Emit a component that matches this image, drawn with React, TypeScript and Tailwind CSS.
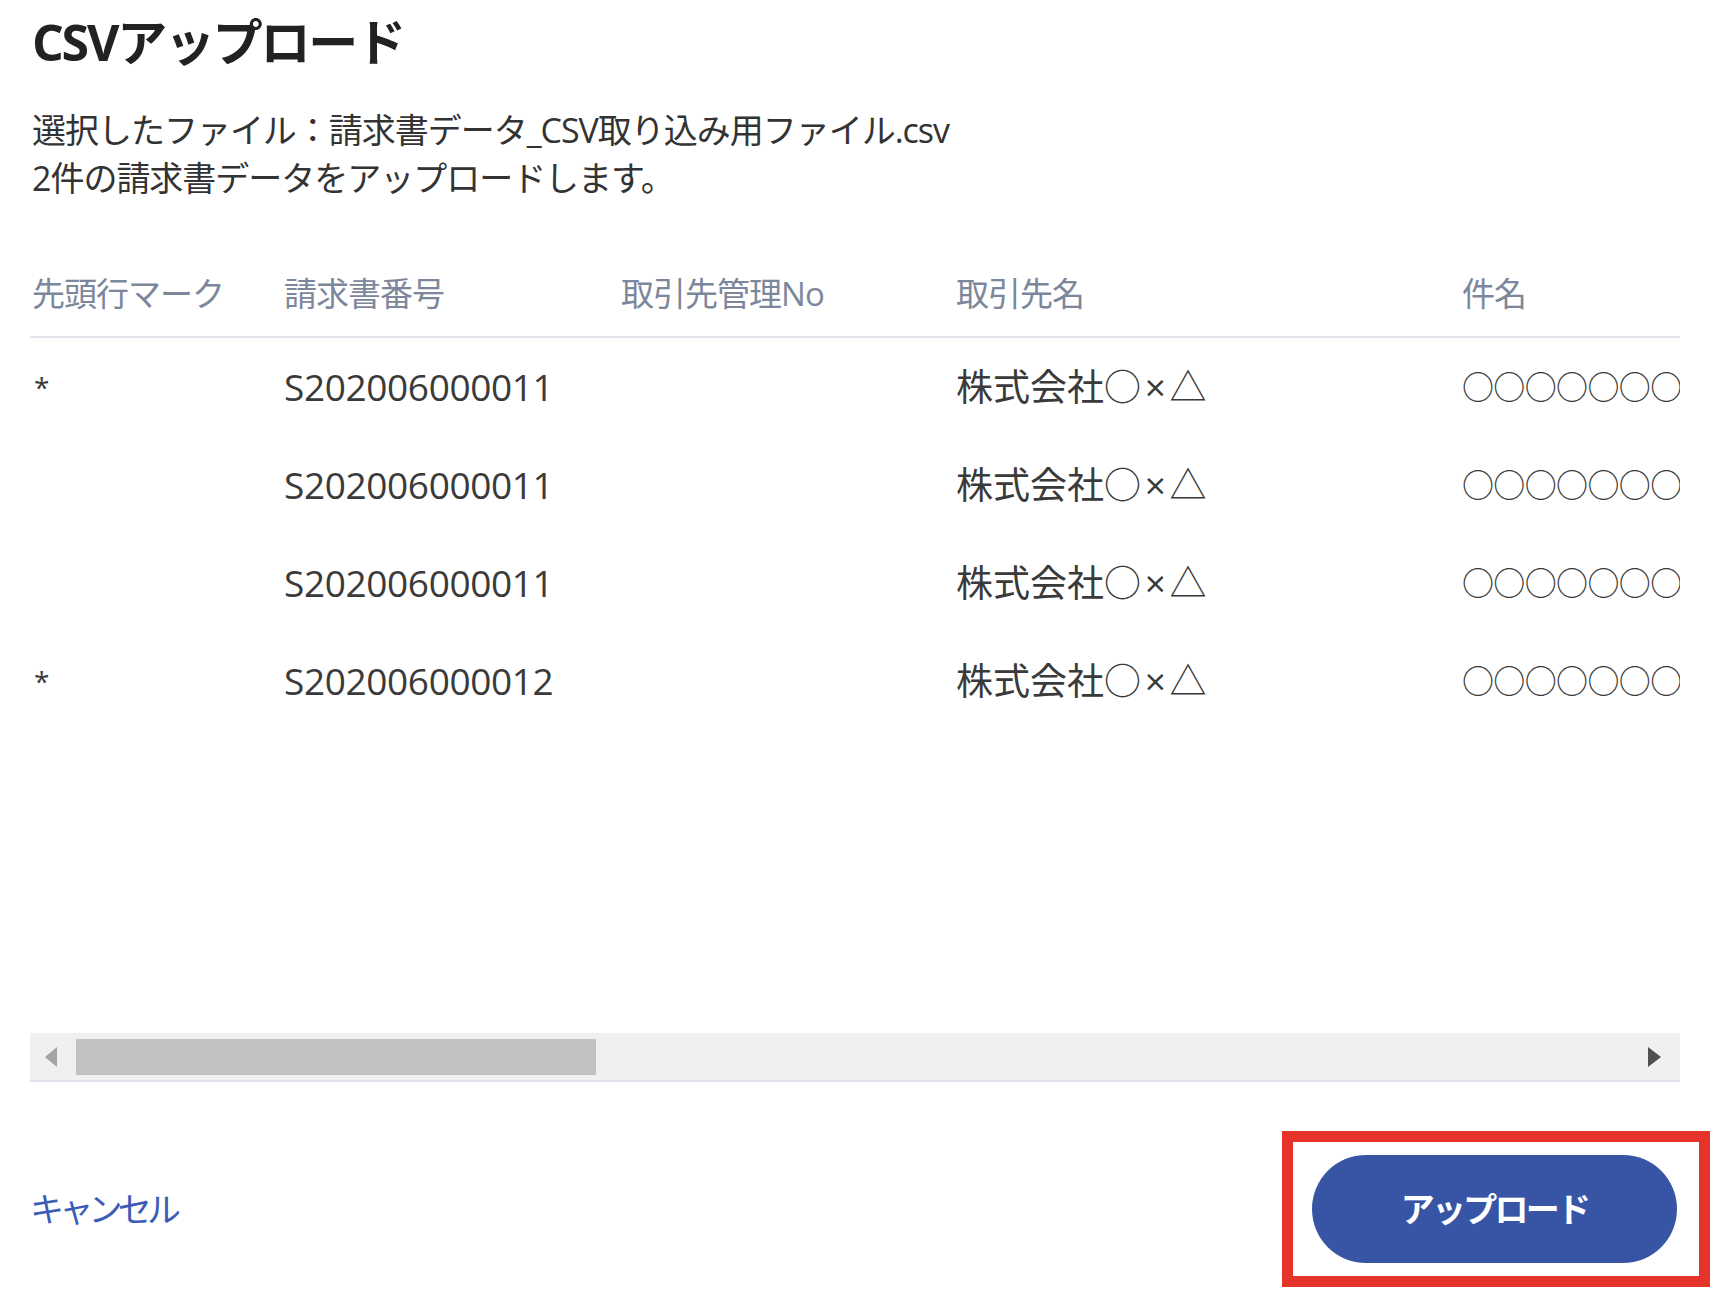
import React from 'react';

const headers = ['先頭行マーク', '請求書番号', '取引先管理No', '取引先名', '件名'];

const rows = [
  { mark: '*', no: 'S202006000011', ref: '', subject: '○○○○○○○○' },
  { mark: '', no: 'S202006000011', ref: '', subject: '○○○○○○○○' },
  { mark: '', no: 'S202006000011', ref: '', subject: '○○○○○○○○' },
  { mark: '*', no: 'S202006000012', ref: '', subject: '○○○○○○○○' },
];

const cols = 'grid grid-cols-[252px_337px_335px_506px_1fr]';

export default function App() {
  return (
    <div className="min-h-screen w-full bg-white font-['Open_Sans','Noto_Sans_CJK_JP',sans-serif]">
      <div className="w-[1680px] pl-[30px]">
        {/* Title */}
        <h1 className="pt-[12px] pl-[2px] text-[50px] font-bold leading-[60px] tracking-[-0.045em] text-[#222]">
          CSVアップロード
        </h1>

        {/* Description */}
        <div className="mt-[34px] pl-[2px] text-[34px] leading-[48px] tracking-[-0.03em] text-[#333]">
          <p>選択したファイル：請求書データ_CSV取り込み用ファイル.csv</p>
          <p>2件の請求書データをアップロードします。</p>
        </div>

        {/* Table */}
        <div className="mt-[68px] h-[763px] overflow-hidden">
          <div className={`${cols} border-b-2 border-[#e1e5ec] pb-[18px] text-[33px] leading-[48px] tracking-[-0.03em] text-[#7c879c]`}>
            {headers.map((h) => (
              <div key={h} className="whitespace-nowrap pl-[2px]">{h}</div>
            ))}
          </div>
          {rows.map((r, i) => (
            <div key={i} className={`${cols} h-[98px] items-center text-[37px] text-[#3a3a3a]`}>
              <div className="self-start pt-[28px] pl-[4px] text-[28px]">{r.mark}</div>
              <div className="pl-[2px] tracking-[-0.01em]">{r.no}</div>
              <div>{r.ref}</div>
              <div className="pl-[2px] whitespace-nowrap">
                株式会社<span className="tracking-[0.1em]">○×△</span>
              </div>
              <div className="overflow-hidden whitespace-nowrap pl-[2px] text-[32px] tracking-[-0.02em]">{r.subject}</div>
            </div>
          ))}
        </div>

        {/* Horizontal scrollbar */}
        <div className="flex h-[49px] items-center border-b-2 border-[#dde1ec] bg-[#f0f0f0] pl-[15px] pr-[19px]">
          <svg width="12" height="20" viewBox="0 0 12 20" className="shrink-0">
            <polygon points="12,0 12,20 0,10" fill="#a3a3a3" />
          </svg>
          <div className="ml-[19px] h-[36px] w-[520px] bg-[#c1c1c1]" />
          <div className="flex-1" />
          <svg width="13" height="20" viewBox="0 0 13 20" className="shrink-0">
            <polygon points="0,0 0,20 13,10" fill="#505050" />
          </svg>
        </div>

        {/* Footer */}
        <div className="mt-[73px] flex items-center justify-between pr-[3px]">
          <button className="text-[34px] leading-[48px] tracking-[-0.14em] text-[#3b5bb5]">キャンセル</button>
          <div className="relative">
            <div className="pointer-events-none absolute -bottom-[24px] -left-[30px] -right-[33px] -top-[24px] border-[11px] border-[#e6332a]" />
            <button className="flex h-[108px] w-[365px] items-center justify-center rounded-full bg-[#3855a5] text-[34px] font-bold tracking-[-0.08em] text-white">
              アップロード
            </button>
          </div>
        </div>
      </div>
    </div>
  );
}
